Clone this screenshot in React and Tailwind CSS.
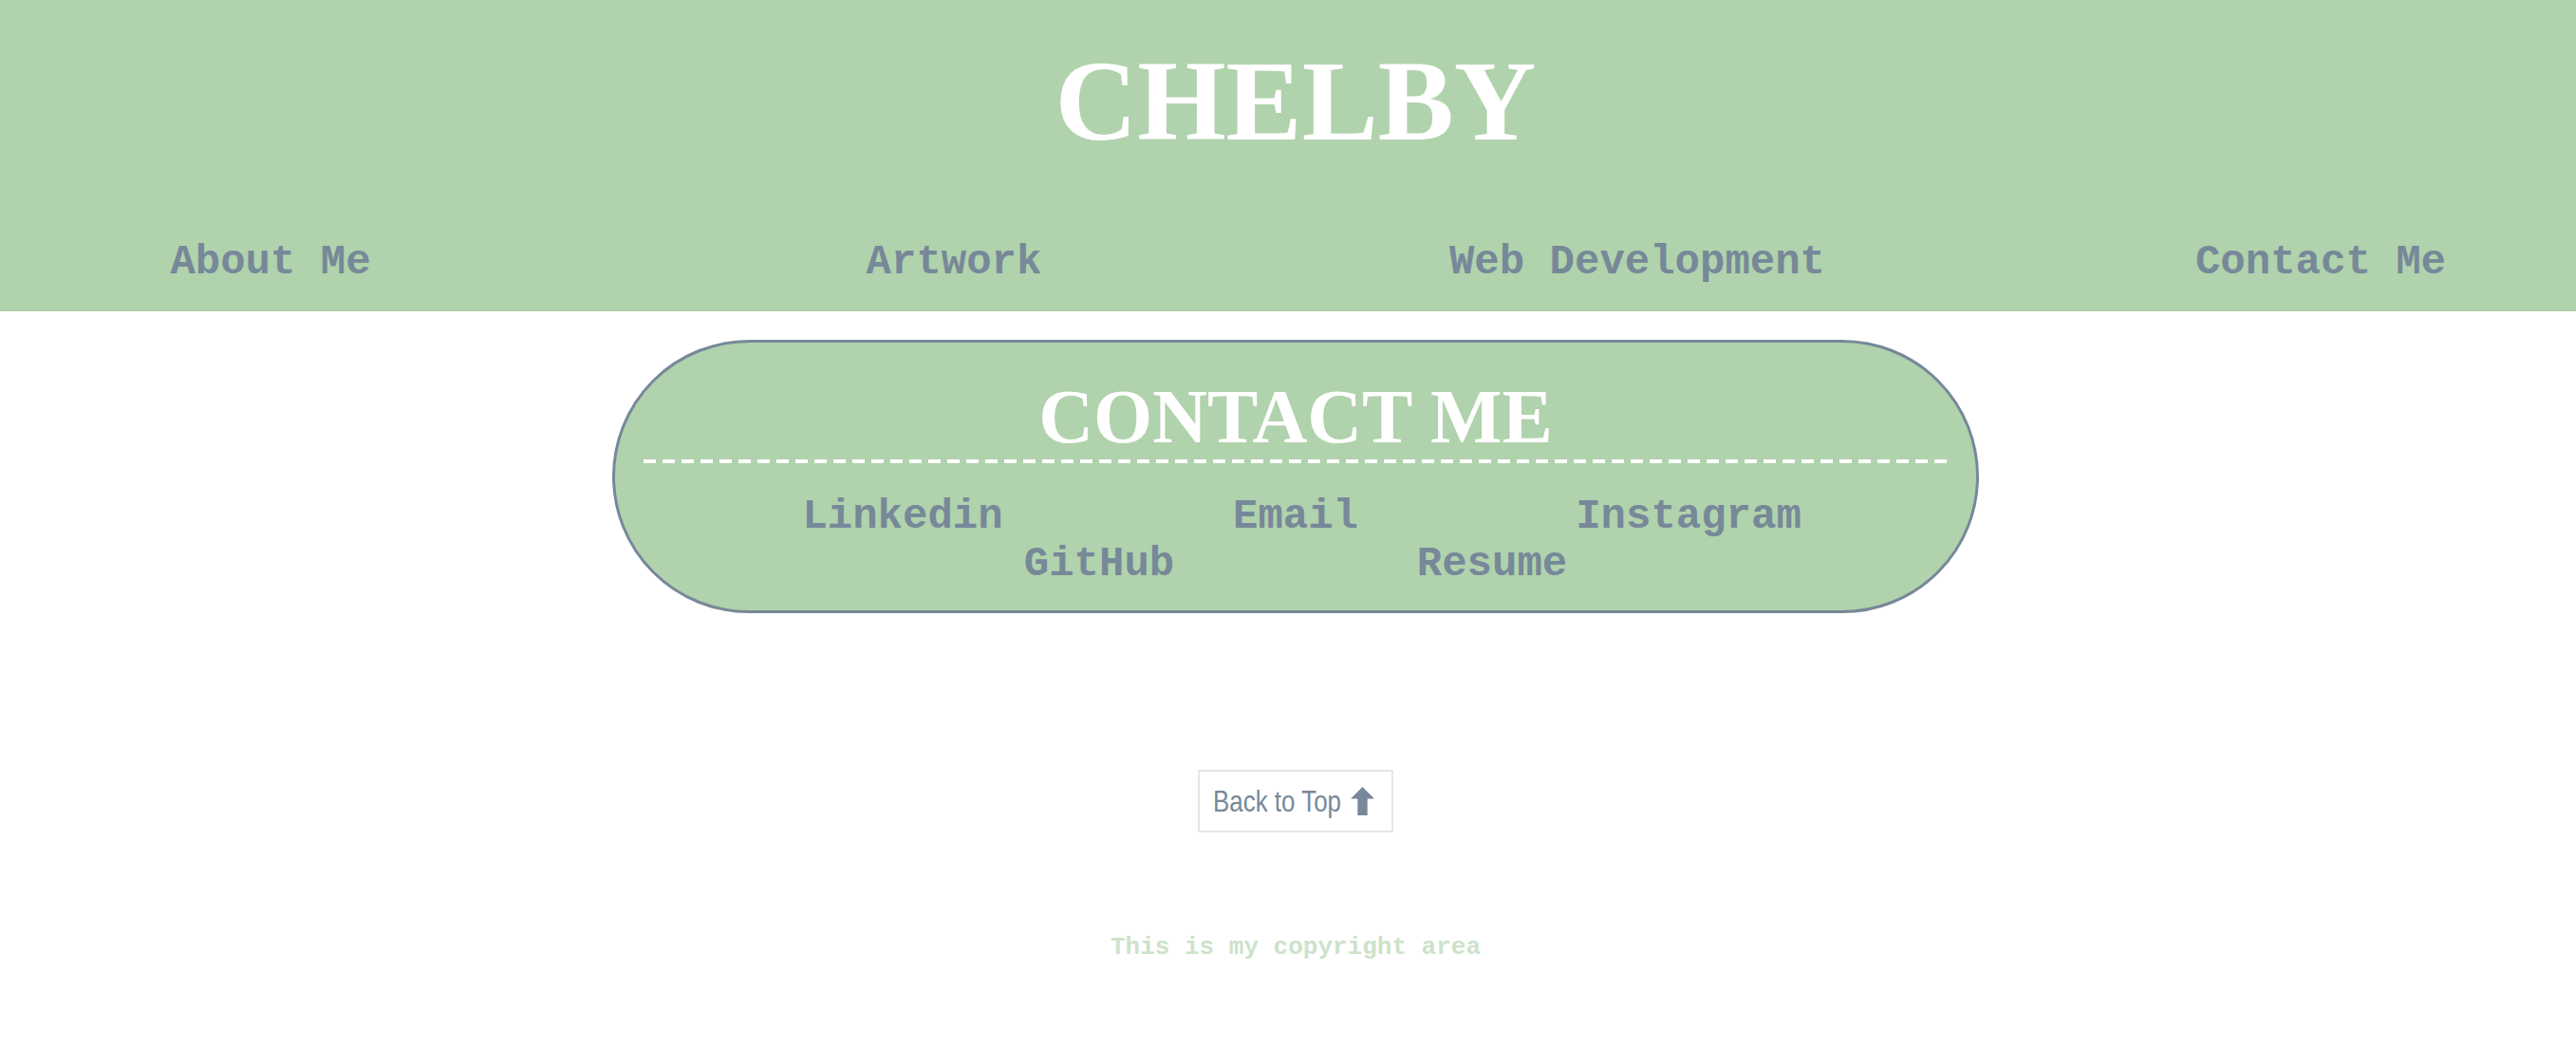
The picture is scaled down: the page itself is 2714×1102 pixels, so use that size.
import React from 'react';

const mono = "font-['Liberation_Mono','Courier_New',monospace]";
const serif = "font-['Liberation_Serif','Times_New_Roman',serif]";

const navItems = ['About Me', 'Artwork', 'Web Development', 'Contact Me'];
const contactLinks = ['Linkedin', 'Email', 'Instagram', 'GitHub', 'Resume'];

function ArrowUp() {
  return (
    <svg width="25" height="30" viewBox="0 0 24 29" className="fill-[#778899]">
      <polygon points="12,0 24,12 17,12 17,29 7,29 7,12 0,12" />
    </svg>
  );
}

export default function App() {
  return (
    <div className="min-h-screen bg-white">
      <header className="h-[328px] bg-[#b0d2ac]">
        <h1 className={`${serif} pl-[16px] pt-[47px] text-center text-[120px] font-bold leading-none text-white`}>
          CHELBY
        </h1>
        <nav className={`${mono} mt-[87px] grid grid-cols-[repeat(4,440px)] gap-x-[280px] pl-[65px] text-[44px] font-bold leading-none text-[#778899]`}>
          {navItems.map((item) => (
            <a key={item} href="#" className="text-center">
              {item}
            </a>
          ))}
        </nav>
      </header>

      <main className="flex flex-col items-center pl-[16px]">
        <section className="mt-[30px] w-[1440px] rounded-full border-[3px] border-[#778899] bg-[#b0d2ac] pb-[24px] pt-[38px]">
          <h2 className={`${serif} text-center text-[80px] font-bold leading-none text-white`}>CONTACT ME</h2>
          <div className="mx-[30px] mt-[5px] h-[4px] bg-[repeating-linear-gradient(90deg,#ffffff_0px,#ffffff_13px,transparent_13px,transparent_20px)]" />
          <div className={`${mono} mt-[31px] flex flex-wrap justify-center text-[44px] font-bold leading-[50px] text-[#778899]`}>
            {contactLinks.map((link) => (
              <a key={link} href="#" className="w-[414px] text-center">
                {link}
              </a>
            ))}
          </div>
        </section>

        <a
          href="#"
          className="mt-[165px] flex h-[66px] w-[206px] items-center border-2 border-[#e6e6e6] pl-[14px] text-[#778899]"
        >
          <span className="mr-[-33px] inline-block origin-left scale-x-[0.81] font-['Liberation_Sans',Arial,sans-serif] text-[32px] leading-none">
            Back to Top
          </span>
          <span className="ml-[11px] flex">
            <ArrowUp />
          </span>
        </a>

        <footer className={`${mono} mt-[108px] text-[26px] font-bold leading-none text-[#cde2c9]`}>
          This is my copyright area
        </footer>
      </main>
    </div>
  );
}
